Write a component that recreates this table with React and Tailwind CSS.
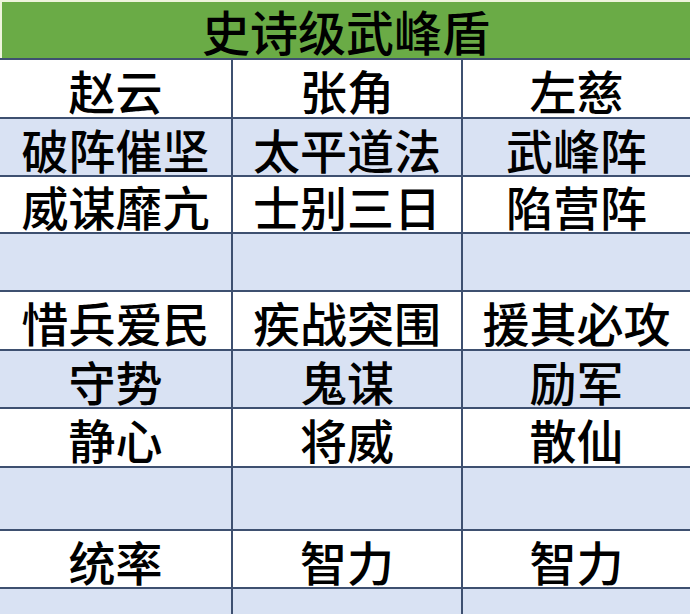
import React from "react";

const rows = [
  { h: "h-[59px]", bg: "bg-white", cells: ["赵云", "张角", "左慈"] },
  { h: "h-[58px]", bg: "bg-[#d9e2f3]", cells: ["破阵催坚", "太平道法", "武峰阵"] },
  { h: "h-[57px]", bg: "bg-white", cells: ["威谋靡亢", "士别三日", "陷营阵"] },
  { h: "h-[58px]", bg: "bg-[#d9e2f3]", cells: ["", "", ""] },
  { h: "h-[59px]", bg: "bg-white", cells: ["惜兵爱民", "疾战突围", "援其必攻"] },
  { h: "h-[58px]", bg: "bg-[#d9e2f3]", cells: ["守势", "鬼谋", "励军"] },
  { h: "h-[59px]", bg: "bg-white", cells: ["静心", "将威", "散仙"] },
  { h: "h-[63px]", bg: "bg-[#d9e2f3]", cells: ["", "", ""] },
  { h: "h-[58px]", bg: "bg-white", cells: ["统率", "智力", "智力"] },
  { h: "h-[27px]", bg: "bg-[#d9e2f3]", cells: ["", "", ""] },
];

function Row({ h, bg, cells }) {
  return (
    <div className={`grid grid-cols-[231px_230px_1fr] border-t-2 border-[#3e5070] ${h} ${bg}`}>
      {cells.map((c, i) => (
        <div
          key={i}
          className={`flex items-center justify-center pt-0.5 text-[47px] leading-none text-black ${
            i > 0 ? "border-l-2 border-[#3e5070]" : ""
          }`}
        >
          {c}
        </div>
      ))}
    </div>
  );
}

export default function App() {
  return (
    <div
      className="w-[690px] h-[614px] overflow-hidden bg-white font-medium"
      style={{ fontFamily: '"Noto Sans CJK SC", sans-serif' }}
    >
      <div className="h-[58px] bg-[#eef4dc] pt-[2px] pl-[2px]">
        <div className="h-full bg-[#6aab46] flex items-center justify-center text-[48px] leading-none text-black">
          史诗级武峰盾
        </div>
      </div>
      {rows.map((r, i) => (
        <Row key={i} {...r} />
      ))}
    </div>
  );
}
